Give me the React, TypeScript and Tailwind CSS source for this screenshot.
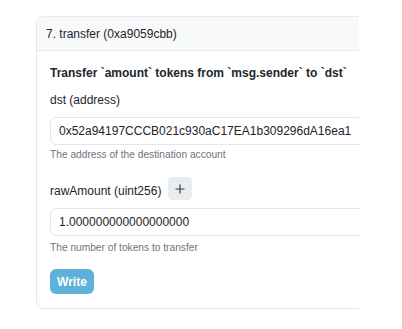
export default function App() {
  return (
    <div className="w-[359px] overflow-hidden bg-white pt-4 pl-9 pb-5 font-['Liberation_Sans',Arial,sans-serif] text-[#212529]">
      <div className="w-[420px] rounded-lg border border-[#e6e8eb]">
        <div className="flex h-[34px] items-center border-b border-[#e6e8eb] bg-[#f8f9fa] px-[9px] text-[12px] rounded-t-lg">
          7. transfer (0xa9059cbb)
        </div>
        <div className="px-[13px] pt-[14px] pb-[14px]">
          <p className="text-[12px] leading-4 font-bold">
            Transfer `amount` tokens from `msg.sender` to `dst`
          </p>

          <label className="mt-[11px] block text-[12px] leading-4">dst (address)</label>
          <div className="mt-[9px] flex h-[28px] items-center rounded-md border border-[#e3e6ea] px-[8px] text-[12px]">
            0x52a94197CCCB021c930aC17EA1b309296dA16ea1
          </div>
          <p className="mt-[3px] text-[10.2px] leading-[14px] text-[#6c757d]">
            The address of the destination account
          </p>

          <div className="mt-[15px] flex items-center gap-[7px]">
            <label className="mt-[5px] text-[12px] leading-4">rawAmount (uint256)</label>
            <button className="flex h-[23px] w-[24px] items-center justify-center rounded bg-[#e9ecef] text-[#343a40]">
              <svg width="10" height="10" viewBox="0 0 10 10" fill="none" stroke="currentColor" strokeWidth="1.2">
                <path d="M5 0.5v9M0.5 5h9" />
              </svg>
            </button>
          </div>
          <div className="mt-[8px] flex h-[28px] items-center rounded-md border border-[#e3e6ea] px-[8px] text-[12px]">
            1.000000000000000000
          </div>
          <p className="mt-[5px] text-[10.2px] leading-[14px] text-[#6c757d]">
            The number of tokens to transfer
          </p>

          <button className="mt-[14px] flex h-[25px] w-[44px] items-center justify-center rounded-md bg-[#5eb1d9] text-[12px] font-bold text-white">
            Write
          </button>
        </div>
      </div>
    </div>
  );
}
